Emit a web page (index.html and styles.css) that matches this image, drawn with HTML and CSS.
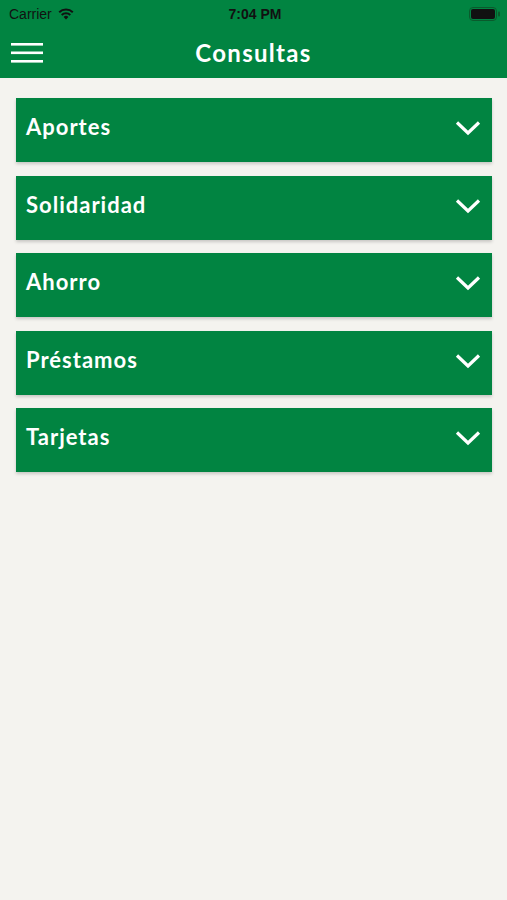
FILE: index.html
```html
<!DOCTYPE html>
<html lang="es">
<head>
  <meta charset="UTF-8">
  <title>Consultas</title>
  <link rel="stylesheet" href="styles.css">
</head>
<body>
  <div class="topbar">
    <div class="status">
      <div class="status-left">
        <span>Carrier</span>
        <svg class="wifi" width="16" height="12" viewBox="0 0 16 12">
          <path d="M8 11.5 L5.6 8.9 A3.4 3.4 0 0 1 10.4 8.9 Z" fill="#111"/>
          <path d="M3.7 7 A6.1 6.1 0 0 1 12.3 7" stroke="#111" stroke-width="2" fill="none"/>
          <path d="M1.2 4.3 A9.8 9.8 0 0 1 14.8 4.3" stroke="#111" stroke-width="2" fill="none"/>
        </svg>
      </div>
      <div class="status-time">7:04 PM</div>
      <div class="status-right">
        <svg width="32" height="14" viewBox="0 0 32 14">
          <rect x="0.5" y="0.5" width="27" height="13" rx="3.5" fill="none" stroke="#0a5a2c"/>
          <rect x="2" y="2" width="24" height="10" rx="2" fill="#111"/>
          <rect x="29" y="4.5" width="2" height="5" rx="1" fill="#0a5a2c"/>
        </svg>
      </div>
    </div>
    <div class="navbar">
      <svg class="menu" width="32" height="22" viewBox="0 0 32 22">
        <rect x="0" y="1" width="32" height="2.6" fill="#fff"/>
        <rect x="0" y="9.5" width="32" height="2.6" fill="#fff"/>
        <rect x="0" y="18" width="32" height="2.6" fill="#fff"/>
      </svg>
      <h1>Consultas</h1>
    </div>
  </div>

  <div class="list">
    <div class="item"><span>Aportes</span><svg class="chev" width="26" height="16" viewBox="0 0 26 16"><path d="M2 2.5 L13 13 L24 2.5" stroke="#fff" stroke-width="3.2" fill="none"/></svg></div>
    <div class="item"><span>Solidaridad</span><svg class="chev" width="26" height="16" viewBox="0 0 26 16"><path d="M2 2.5 L13 13 L24 2.5" stroke="#fff" stroke-width="3.2" fill="none"/></svg></div>
    <div class="item"><span>Ahorro</span><svg class="chev" width="26" height="16" viewBox="0 0 26 16"><path d="M2 2.5 L13 13 L24 2.5" stroke="#fff" stroke-width="3.2" fill="none"/></svg></div>
    <div class="item"><span>Préstamos</span><svg class="chev" width="26" height="16" viewBox="0 0 26 16"><path d="M2 2.5 L13 13 L24 2.5" stroke="#fff" stroke-width="3.2" fill="none"/></svg></div>
    <div class="item"><span>Tarjetas</span><svg class="chev" width="26" height="16" viewBox="0 0 26 16"><path d="M2 2.5 L13 13 L24 2.5" stroke="#fff" stroke-width="3.2" fill="none"/></svg></div>
  </div>
</body>
</html>
```

FILE: styles.css
```css
body {
  margin: 0;
  background-color: #f4f3ef;
  font-family: Lato, "Open Sans", sans-serif;
  min-height: 900px;
}

.topbar {
  background-color: #018441;
  height: 78px;
}

.status {
  height: 27px;
  display: flex;
  align-items: center;
  justify-content: space-between;
  padding: 0 6px 0 9px;
  font-family: "Liberation Sans", Arial, sans-serif;
  font-size: 14px;
  color: #111;
}

.status-left {
  display: flex;
  align-items: center;
  gap: 6px;
  width: 120px;
}

.status-time {
  font-weight: bold;
}

.status-right {
  width: 120px;
  display: flex;
  justify-content: flex-end;
}

.navbar {
  position: relative;
  height: 51px;
  display: flex;
  align-items: center;
  justify-content: center;
}

.menu {
  position: absolute;
  left: 11px;
  top: 15px;
}

.navbar h1 {
  margin: 0;
  color: #fff;
  font-size: 24px;
  font-weight: 700;
  letter-spacing: 1.3px;
}

.list {
  padding: 20px 15px 0 16px;
  display: flex;
  flex-direction: column;
  gap: 13.5px;
}

.item {
  height: 64px;
  background-color: #018441;
  box-shadow: 0 2px 3px rgba(0, 0, 0, 0.18);
  display: flex;
  align-items: center;
  justify-content: space-between;
  padding: 0 11px 0 10px;
  color: #fff;
  font-size: 22px;
  font-weight: 700;
  letter-spacing: 1px;
}

.item span {
  margin-top: -7px;
}

.chev {
  margin-top: -4px;
}
```
